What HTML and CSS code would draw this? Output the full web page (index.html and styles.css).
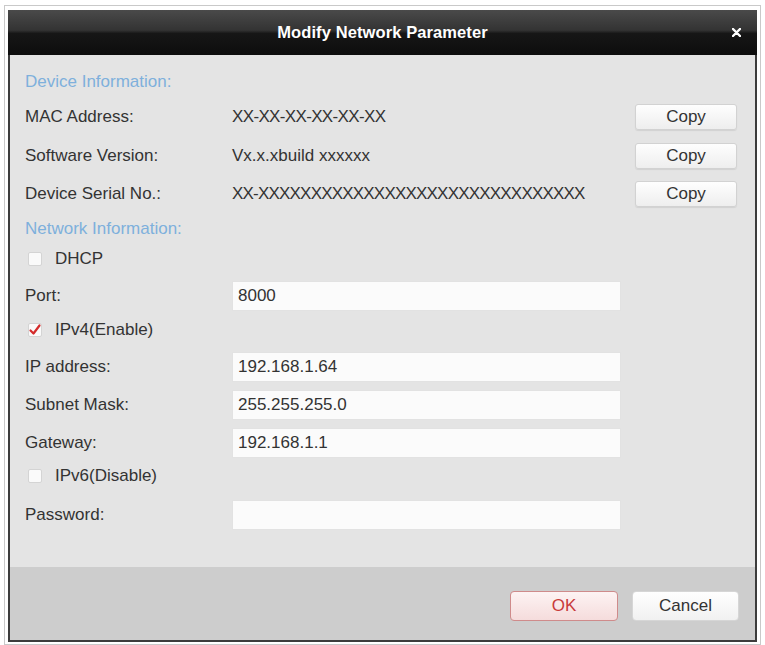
FILE: index.html
```html
<!DOCTYPE html>
<html>
<head>
<meta charset="utf-8">
<title>Modify Network Parameter</title>
<link rel="stylesheet" href="styles.css">
</head>
<body>
<div class="frame">
  <div class="dialog">
    <div class="titlebar">
      <span class="title">Modify Network Parameter</span>
      <span class="close" aria-label="Close">
        <svg width="9" height="9" viewBox="0 0 9 9"><path d="M1 1 L8 8 M8 1 L1 8" stroke="#fff" stroke-width="2.4" stroke-linecap="round"/></svg>
      </span>
    </div>
    <div class="content">
      <div class="row heading g12">Device Information:</div>
      <div class="row g5">
        <span class="label">MAC Address:</span>
        <span class="value xs">XX-XX-XX-XX-XX-XX</span>
        <button class="btn copy">Copy</button>
      </div>
      <div class="row g9">
        <span class="label">Software Version:</span>
        <span class="value">Vx.x.xbuild xxxxxx</span>
        <button class="btn copy">Copy</button>
      </div>
      <div class="row g8">
        <span class="label">Device Serial No.:</span>
        <span class="value xs serial">XX-XXXXXXXXXXXXXXXXXXXXXXXXXXXXXXX</span>
        <button class="btn copy">Copy</button>
      </div>
      <div class="row heading g5">Network Information:</div>
      <div class="row check g0">
        <span class="box"></span>
        <span class="clabel">DHCP</span>
      </div>
      <div class="row g7">
        <span class="label">Port:</span>
        <span class="field">8000</span>
      </div>
      <div class="row check g4">
        <span class="box">
          <svg width="14" height="14" viewBox="0 0 14 14"><path d="M2.5 7.5 L5.5 10.5 L11.5 2.5" fill="none" stroke="#d42b2b" stroke-width="2.2" stroke-linecap="round" stroke-linejoin="round"/></svg>
        </span>
        <span class="clabel">IPv4(Enable)</span>
      </div>
      <div class="row g7">
        <span class="label">IP address:</span>
        <span class="field">192.168.1.64</span>
      </div>
      <div class="row g8">
        <span class="label">Subnet Mask:</span>
        <span class="field">255.255.255.0</span>
      </div>
      <div class="row g8">
        <span class="label">Gateway:</span>
        <span class="field">192.168.1.1</span>
      </div>
      <div class="row check g3">
        <span class="box"></span>
        <span class="clabel">IPv6(Disable)</span>
      </div>
      <div class="row g9">
        <span class="label">Password:</span>
        <span class="field"></span>
      </div>
    </div>
    <div class="footer">
      <button class="btn ok">OK</button>
      <button class="btn cancel">Cancel</button>
    </div>
  </div>
</div>
</body>
</html>
```
FILE: styles.css
```css
html, body {
  margin: 0;
  padding: 0;
  background: #ffffff;
}
body {
  padding: 5px 0 0 4px;
  font-family: "Liberation Sans", Arial, sans-serif;
  font-size: 17px;
  color: #333333;
}
.frame {
  box-sizing: border-box;
  width: 757px;
  height: 640px;
  border: 1px solid #c9c9c9;
  padding: 4px 3px 0 3px;
}
.dialog {
  height: 632px;
  box-sizing: border-box;
  border: 2px solid #3c3c3c;
  border-top: 0;
  display: flex;
  flex-direction: column;
  background: #e4e4e4;
}
.titlebar {
  height: 45px;
  flex: none;
  margin: 0 -2px;
  background: linear-gradient(#4a4a4a 0%, #333333 45%, #161616 52%, #0d0d0d 100%);
  display: flex;
  align-items: center;
  justify-content: center;
  position: relative;
}
.title {
  color: #ffffff;
  font-weight: bold;
  font-size: 16.5px;
  letter-spacing: 0.1px;
}
.close {
  position: absolute;
  right: 16px;
  top: 18px;
  width: 9px;
  height: 9px;
  display: flex;
}
.content {
  flex: 1;
  padding: 0 18px 0 15px;
  display: flex;
  flex-direction: column;
}
.row {
  height: 30px;
  display: flex;
  align-items: center;
  flex: none;
}
.g0 { margin-top: 0; }
.g3 { margin-top: 3px; }
.g4 { margin-top: 4px; }
.g5 { margin-top: 5px; }
.g7 { margin-top: 7px; }
.g8 { margin-top: 8px; }
.g9 { margin-top: 9px; }
.g12 { margin-top: 12px; }
.heading {
  color: #7eb0dc;
  font-size: 17px;
}
.label {
  width: 207px;
  flex: none;
}
.value {
  width: 389px;
  flex: none;
}
.xs {
  letter-spacing: -0.65px;
}
.serial {
  letter-spacing: -0.8px;
}
.field {
  width: 389px;
  height: 30px;
  box-sizing: border-box;
  flex: none;
  background: #fbfbfb;
  border: 1px solid #e2e2e2;
  padding-left: 5px;
  display: flex;
  align-items: center;
}
.check .box {
  margin-left: 3px;
  width: 14px;
  height: 14px;
  box-sizing: border-box;
  background: #fafafa;
  border: 1px solid #d4d4d4;
  border-radius: 2px;
  display: flex;
  align-items: center;
  justify-content: center;
}
.check .box svg {
  flex: none;
}
.clabel {
  margin-left: 13px;
}
.btn {
  font-family: "Liberation Sans", Arial, sans-serif;
  font-size: 17px;
  color: #333333;
  box-sizing: border-box;
  border-radius: 3px;
  cursor: pointer;
  padding: 0;
}
.copy {
  margin-left: 14px;
  width: 102px;
  height: 26px;
  background: linear-gradient(#fefefe, #eeeeee);
  border: 1px solid #d2d2d2;
  box-shadow: 0 1px 1px rgba(0,0,0,0.08);
}
.footer {
  height: 73px;
  flex: none;
  background: #cdcdcd;
  display: flex;
  align-items: center;
  justify-content: flex-end;
  padding-right: 16px;
  gap: 14px;
}
.ok, .cancel {
  width: 108px;
  height: 30px;
  margin-top: 4px;
}
.ok {
  background: linear-gradient(#fdf3f3, #f5dcdc);
  border: 1px solid #cf8b8b;
  color: #c83a3a;
  border-radius: 4px;
}
.cancel {
  width: 107px;
  background: linear-gradient(#ffffff, #f1f1f1);
  border: 1px solid #d6d6d6;
  border-radius: 4px;
}
```
